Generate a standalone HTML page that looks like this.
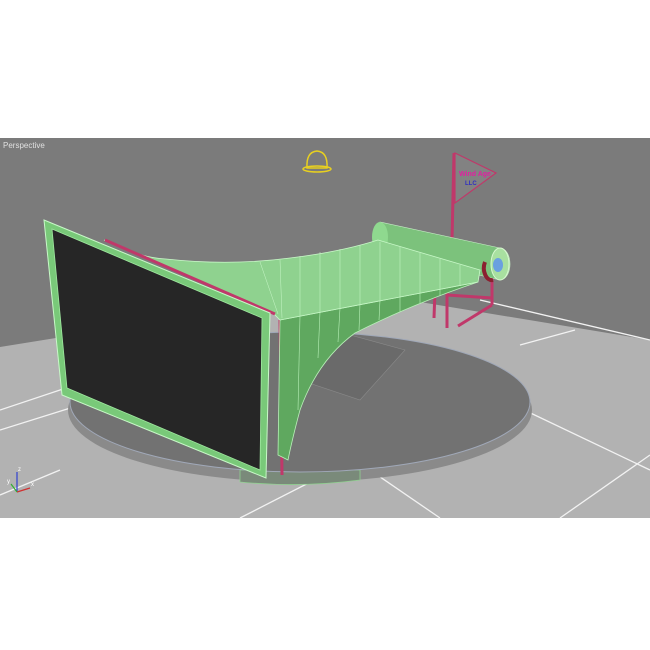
<!DOCTYPE html>
<html><head><style>
body{margin:0;background:#fff;width:650px;height:650px;overflow:hidden}
svg{display:block}
</style></head><body>
<svg width="650" height="650" viewBox="0 0 650 650" xmlns="http://www.w3.org/2000/svg">
<rect x="0" y="0" width="650" height="650" fill="#fff"/>
<rect x="0" y="138" width="650" height="380" fill="#7b7b7b"/>
<!-- floor -->
<polygon points="0,347 180,318 420,302 650,340 650,518 0,518" fill="#b2b2b2"/>
<g stroke="#f2f2f2" stroke-width="1.3" fill="none">
<line x1="0" y1="430" x2="80" y2="405"/>
<line x1="0" y1="495" x2="60" y2="470"/>
<line x1="240" y1="518" x2="330" y2="472"/>
<line x1="370" y1="470" x2="440" y2="518"/>
<line x1="520" y1="408" x2="650" y2="470"/>
<line x1="520" y1="345" x2="575" y2="330"/>
<line x1="560" y1="518" x2="650" y2="455"/>
<line x1="150" y1="360" x2="0" y2="410"/>
<line x1="480" y1="300" x2="650" y2="340"/>
</g>
<!-- disc -->
<ellipse cx="300" cy="410" rx="232" ry="72" fill="#8a8a8a"/>
<path d="M240,470 L240,482 Q300,488 360,480 L360,470 Z" fill="#7a8a7a" stroke="#90d090" stroke-width="0.8"/>
<ellipse cx="300" cy="402" rx="230" ry="70" fill="#727272" stroke="#a0a8b8" stroke-width="1"/>
<!-- shadow grid -->
<polygon points="300,380 350,335 405,350 360,400" fill="#6a6a6a" stroke="#8a8a8a" stroke-width="0.6"/>
<!-- pink legs -->
<g stroke="#c0386a" stroke-width="3" fill="none">
<line x1="143" y1="395" x2="143" y2="410"/>
<line x1="435" y1="290" x2="434" y2="318"/>
<line x1="447" y1="290" x2="447" y2="328"/>
<line x1="447" y1="295" x2="492" y2="298"/>
<line x1="492" y1="272" x2="492" y2="305"/>
<line x1="492" y1="305" x2="458" y2="326"/>
<line x1="454" y1="153" x2="452" y2="240"/>
<line x1="280" y1="320" x2="282" y2="475"/>
</g>
<!-- flag -->
<polygon points="455,153 496,173 455,203" fill="#828282" stroke="#c0386a" stroke-width="1.2"/>
<text x="459" y="176" font-family="Liberation Sans,sans-serif" font-size="7" font-weight="bold" fill="#e020a0">Wind Age</text>
<text x="465" y="185" font-family="Liberation Sans,sans-serif" font-size="6" font-weight="bold" fill="#3030c0">LLC</text>
<!-- roller -->
<path d="M380,222 L500,248 A10,16 0 0 1 500,280 L380,252 Z" fill="#7cc27c" stroke="#c8f0c8" stroke-width="0.6"/>
<ellipse cx="380" cy="237" rx="8" ry="15" fill="#8fd98f"/>
<ellipse cx="500" cy="264" rx="9" ry="16" fill="#a8e0a0" stroke="#d8f8d0"/>
<ellipse cx="498" cy="265" rx="5" ry="7" fill="#6aa0e0"/>
<path d="M485,262 a8,12 0 0 0 8,18" stroke="#8b2030" stroke-width="4" fill="none"/>
<!-- horn front face -->
<path d="M280,320 L478,282 Q410,305 355,333 Q318,360 300,410 Q292,440 288,460 L278,455 Z" fill="#5fa85f" stroke="#b8f0b8" stroke-width="0.8"/>
<g stroke="#b8f0b8" stroke-width="0.6">
<line x1="300" y1="316" x2="298" y2="410"/><line x1="320" y1="312" x2="318" y2="358"/>
<line x1="340" y1="308" x2="338" y2="342"/><line x1="360" y1="304" x2="359" y2="330"/>
<line x1="380" y1="300" x2="379" y2="320"/><line x1="400" y1="297" x2="400" y2="312"/>
<line x1="420" y1="293" x2="420" y2="303"/><line x1="440" y1="289" x2="440" y2="296"/>
</g>
<!-- horn top surface -->
<path d="M104,240 Q140,258 166,259 Q230,266 290,258 Q340,252 378,240 L480,270 L478,282 L280,320 L275,315 Z" fill="#8fd28f" stroke="#c8f8c8" stroke-width="0.8"/>
<g stroke="#c8f8c8" stroke-width="0.5">
<line x1="300" y1="256" x2="300" y2="316"/><line x1="320" y1="252" x2="320" y2="312"/>
<line x1="340" y1="249" x2="340" y2="308"/><line x1="360" y1="245" x2="360" y2="304"/>
<line x1="380" y1="242" x2="380" y2="300"/><line x1="400" y1="247" x2="400" y2="297"/>
<line x1="420" y1="253" x2="420" y2="293"/><line x1="440" y1="259" x2="440" y2="289"/>
<line x1="460" y1="265" x2="460" y2="285"/><line x1="280" y1="260" x2="282" y2="318"/>
<line x1="260" y1="262" x2="278" y2="314"/>
</g>
<line x1="105" y1="240" x2="275" y2="314" stroke="#c0386a" stroke-width="3"/>
<!-- billboard -->
<polygon points="44,220 270,313 266,478 62,395" fill="#79c979" stroke="#c8f8c8"/>
<polygon points="52,229 262,318 260,470 67,388" fill="#262626" stroke="#a0e8a0" stroke-width="0.8"/>
<!-- helmet -->
<path d="M307,168 Q306,152 317,151 Q328,152 327,168 Z" fill="none" stroke="#e8d020" stroke-width="1.5"/>
<ellipse cx="317" cy="169" rx="14" ry="3" fill="none" stroke="#e8d020" stroke-width="1.5"/>
<!-- axis -->
<line x1="17" y1="492" x2="17" y2="472" stroke="#3040d0" stroke-width="1.2"/>
<line x1="17" y1="492" x2="30" y2="488" stroke="#d03030" stroke-width="1.2"/>
<line x1="17" y1="492" x2="11" y2="484" stroke="#30b030" stroke-width="1.2"/>
<text x="18" y="471" font-family="Liberation Sans,sans-serif" font-size="6" fill="#fff">z</text>
<text x="7" y="483" font-family="Liberation Sans,sans-serif" font-size="6" fill="#fff">y</text>
<text x="31" y="486" font-family="Liberation Sans,sans-serif" font-size="6" fill="#fff">x</text>
<text x="3" y="148" font-family="Liberation Sans,sans-serif" font-size="8" fill="#e0e0e0">Perspective</text>
</svg>
</body></html>
